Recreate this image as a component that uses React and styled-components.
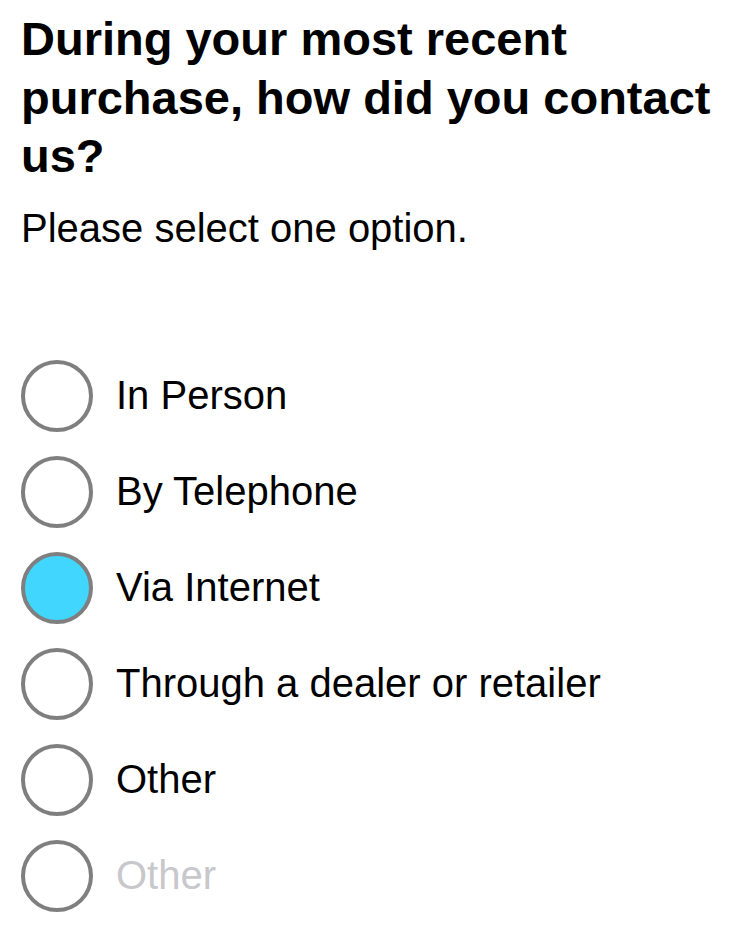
import React from 'react';
import styled, { createGlobalStyle } from 'styled-components';

const GlobalStyle = createGlobalStyle`
    body {
        margin: 0;
        background: #ffffff;
        font-family: "Liberation Sans", Arial, Helvetica, sans-serif;
        color: #000000;
    }
`;

const Page = styled.div`
    width: 750px;
    min-height: 944px;
    box-sizing: border-box;
    padding: 10px 21px 0 21px;
`;

const Question = styled.h1`
    margin: 0;
    font-size: 47px;
    font-weight: bold;
    line-height: 58.5px;
`;

const Hint = styled.p`
    margin: 18px 0 0 0;
    font-size: 40px;
    line-height: 48px;
`;

const OptionList = styled.ul`
    list-style: none;
    margin: 96px 0 0 0;
    padding: 0;
    display: flex;
    flex-direction: column;
`;

const Option = styled.li`
    height: 96px;
    display: flex;
    align-items: center;
    gap: 23px;
    cursor: pointer;
`;

const Radio = styled.span`
    width: 72px;
    height: 72px;
    box-sizing: border-box;
    border-radius: 50%;
    border: 4px solid #7f7f7f;
    background: ${props => props.checked ? '#40d6fe' : '#ffffff'};
    flex-shrink: 0;
`;

const Label = styled.span`
    font-size: 40px;
    color: ${props => props.muted ? '#c7c7cc' : '#000000'};
`;

const options = [
    { id: 1, label: 'In Person' },
    { id: 2, label: 'By Telephone' },
    { id: 3, label: 'Via Internet' },
    { id: 4, label: 'Through a dealer or retailer' },
    { id: 5, label: 'Other' },
    { id: 6, label: 'Other', placeholder: true },
];

const App = () => {
    const [selected, setSelected] = React.useState(3);

    return (
        <Page>
            <GlobalStyle />
            <Question>During your most recent purchase, how did you contact us?</Question>
            <Hint>Please select one option.</Hint>
            <OptionList>
                {options.map(opt => (
                    <Option key={opt.id} onClick={() => setSelected(opt.id)}>
                        <Radio checked={selected === opt.id} />
                        <Label muted={opt.placeholder}>{opt.label}</Label>
                    </Option>
                ))}
            </OptionList>
        </Page>
    );
}

export default App;
